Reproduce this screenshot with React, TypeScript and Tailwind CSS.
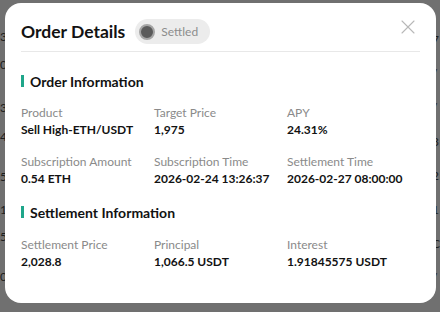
import { X } from 'lucide-react'

const leftMarks = [
  { t: '3', y: 'h-[44px]' },
  { t: '0', y: 'h-[28px]' },
  { t: '3', y: 'h-[43px]' },
  { t: '4', y: 'h-[29px]' },
  { t: '5', y: 'h-[40px]' },
  { t: '1', y: 'h-[33px]' },
  { t: '5', y: 'h-[27px]' },
  { t: '0', y: 'h-[40px]' },
]

const rightMarks = ['7', '/', '/', '3', '2', '1', 'C', '/']

function Field({ label, value }: { label: string; value: string }) {
  return (
    <div className="flex flex-col">
      <span className="text-[12px] leading-[16px] text-[#8a8a8a]">{label}</span>
      <span className="mt-[1px] text-[12px] leading-[16px] font-bold text-[#121212]">{value}</span>
    </div>
  )
}

function SectionTitle({ children }: { children: string }) {
  return (
    <div className="flex items-center h-[20px] gap-[6px]">
      <span className="w-[3px] h-[12px] bg-[#1fa68a]"></span>
      <span className="text-[14px] font-bold text-[#121212]">{children}</span>
    </div>
  )
}

export default function App() {
  return (
    <div
      className="relative w-[440px] h-[312px] overflow-hidden bg-[#707070]"
      style={{ fontFamily: 'Lato, "Noto Sans", sans-serif' }}
    >
      {/* page behind the overlay */}
      <div className="flex justify-between h-full text-[12px] text-[#1e1e1e]">
        <div className="flex flex-col">
          {leftMarks.map((m, i) => (
            <div key={i} className={`${m.y} flex items-end leading-[14px]`}>{m.t}</div>
          ))}
        </div>
        <div className="flex flex-col gap-[22px] pt-[34px]">
          {rightMarks.map((m, i) => (
            <div key={i} className="leading-[12px]">{m}</div>
          ))}
        </div>
      </div>

      {/* modal */}
      <div className="absolute left-[5px] top-[3px] w-[431px] h-[300px] bg-white rounded-[16px] px-4">
        <div className="flex items-center justify-between pt-[16px] pb-[7px] border-b border-[#e8e8e8]">
          <div className="flex items-center gap-[10px] h-[25px]">
            <h1 className="text-[17.5px] font-bold text-[#121212] leading-[25px]">Order Details</h1>
            <div className="flex items-center gap-[6px] h-[25px] pl-[4px] pr-[12px] rounded-full bg-[#ececec]">
              <span className="w-[16px] h-[16px] rounded-full bg-[#5a5a5a] border-2 border-[#a5a5a5]"></span>
              <span className="text-[12px] text-[#8c8c8c]">Settled</span>
            </div>
          </div>
          <X className="w-[24px] h-[24px] text-[#b8b8b8] -mt-[9px]" strokeWidth={1.1} />
        </div>

        <div className="mt-[19px]">
          <SectionTitle>Order Information</SectionTitle>
        </div>
        <div className="grid grid-cols-3 mt-[14px] gap-y-[16px]">
          <Field label="Product" value="Sell High-ETH/USDT" />
          <Field label="Target Price" value="1,975" />
          <Field label="APY" value="24.31%" />
          <Field label="Subscription Amount" value="0.54 ETH" />
          <Field label="Subscription Time" value="2026-02-24 13:26:37" />
          <Field label="Settlement Time" value="2026-02-27 08:00:00" />
        </div>

        <div className="mt-[15px]">
          <SectionTitle>Settlement Information</SectionTitle>
        </div>
        <div className="grid grid-cols-3 mt-[15px]">
          <Field label="Settlement Price" value="2,028.8" />
          <Field label="Principal" value="1,066.5 USDT" />
          <Field label="Interest" value="1.91845575 USDT" />
        </div>
      </div>
    </div>
  )
}
